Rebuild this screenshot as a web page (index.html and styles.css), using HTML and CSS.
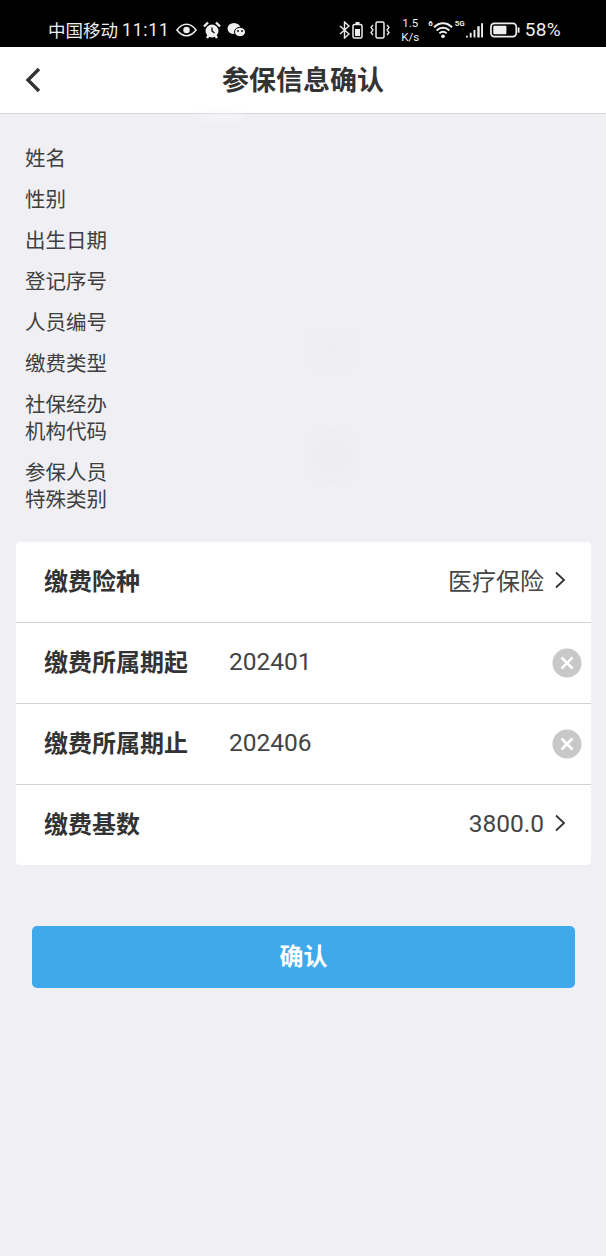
FILE: index.html
```html
<!DOCTYPE html>
<html lang="zh-CN">
<head>
    <meta charset="UTF-8">
    <meta name="viewport" content="width=device-width, initial-scale=1.0">
    <title>参保信息确认</title>
    <link rel="stylesheet" href="styles.css">
</head>
<body>
    <!-- Status bar -->
    <div class="status-bar">
        <div class="status-left">
            <span class="carrier">中国移动</span>
            <span class="clock">11:11</span>
            <svg class="ico" width="21" height="14" viewBox="0 0 22 14"><path d="M1 7c3-4 6-6 10-6s7 2 10 6c-3 4-6 6-10 6S4 11 1 7z" fill="none" stroke="#eee" stroke-width="1.6"/><circle cx="11" cy="7" r="3.4" fill="#eee"/></svg>
            <svg class="ico" width="18" height="18" viewBox="0 0 18 18"><circle cx="9" cy="10" r="6.500" fill="#eee"/><path d="M1 5.500 5 1.500M17 5.500 13 1.500M4 17l2-3M14 17l-2-3" stroke="#eee" stroke-width="2.400"/><path d="M9 6.500V10l2.500 2" fill="none" stroke="#000" stroke-width="1.300"/></svg>
            <svg class="ico" width="19" height="16" viewBox="0 0 19 16"><ellipse cx="7" cy="6.500" rx="6.500" ry="5.500" fill="#eee"/><ellipse cx="13" cy="10" rx="5.500" ry="4.700" fill="#eee" stroke="#000" stroke-width="1"/><circle cx="11" cy="9" r=".9" fill="#000"/><circle cx="15" cy="9" r=".9" fill="#000"/></svg>
        </div>
        <div class="status-right">
            <svg class="ico" width="11" height="18" viewBox="0 0 11 18"><path d="M1 5l9 8-4.500 4V1L10 5l-9 8" fill="none" stroke="#eee" stroke-width="1.400"/></svg>
            <svg class="ico" width="11" height="18" viewBox="0 0 11 18"><rect x="1" y="3.500" width="9" height="13.500" rx="1.500" fill="none" stroke="#eee" stroke-width="1.500"/><rect x="3.500" y="1" width="4" height="2" fill="#eee"/><rect x="3" y="8" width="5" height="7" fill="#eee"/></svg>
            <svg class="ico vibrate" width="20" height="18" viewBox="0 0 20 18"><rect x="6" y="1" width="8" height="16" rx="1.500" fill="none" stroke="#eee" stroke-width="1.500"/><path d="M3 4 1 6.500l2 2.500-2 2.500L3 14M17 4l2 2.500L17 9l2 2.500L17 14" fill="none" stroke="#eee" stroke-width="1.300"/></svg>
            <span class="speed">1.5<br>K/s</span>
            <span class="tiny">6</span>
            <svg class="ico" width="20" height="18" viewBox="0 0 22 18"><path d="M1 6c6-6 14-6 20 0M4 9.500c4-4 10-4 14 0M7 12.500c2.500-2 5.500-2 8 0" fill="none" stroke="#eee" stroke-width="2.200"/><circle cx="11" cy="16" r="2" fill="#eee"/></svg>
            <span class="tiny">5G</span>
            <svg class="ico" width="18" height="18" viewBox="0 0 19 18"><path d="M1 15h2v2H1zM5 12h2v5H5zM9 9h2v8H9zM13 5h2.500v12H13zM17 2h2v15h-2z" fill="#eee"/></svg>
            <svg class="ico battery" width="30" height="16" viewBox="0 0 32 16"><rect x="1" y="1" width="27" height="14" rx="3.500" fill="none" stroke="#eee" stroke-width="1.800"/><rect x="3.500" y="3.500" width="14" height="9" rx="1" fill="#eee"/><rect x="29.500" y="5" width="2" height="6" rx="1" fill="#eee"/></svg>
            <span class="percent">58%</span>
        </div>
    </div>

    <!-- Nav bar -->
    <header class="nav">
        <svg class="back" width="18" height="26" viewBox="0 0 18 26"><path d="M15 2 4 13l11 11" fill="none" stroke="#333" stroke-width="3.400"/></svg>
        <h1>参保信息确认</h1>
    </header>

    <!-- Read-only info -->
    <div class="info">
        <div class="smudge smudge-top"></div>
        <div class="smudge smudge-mid"></div>
        <div class="smudge smudge-low"></div>
        <div class="info-row">姓名</div>
        <div class="info-row">性别</div>
        <div class="info-row">出生日期</div>
        <div class="info-row">登记序号</div>
        <div class="info-row">人员编号</div>
        <div class="info-row">缴费类型</div>
        <div class="info-row">社保经办<br>机构代码</div>
        <div class="info-row">参保人员<br>特殊类别</div>
    </div>

    <!-- Form card -->
    <div class="card">
        <div class="row">
            <span class="row-label">缴费险种</span>
            <span class="row-value row-value-cn">医疗保险</span>
            <svg class="arrow" width="12" height="18" viewBox="0 0 12 18"><path d="M2 1.500 10 9l-8 7.500" fill="none" stroke="#333" stroke-width="1.800"/></svg>
        </div>
        <div class="row">
            <span class="row-label">缴费所属期起</span>
            <span class="row-input">202401</span>
            <svg class="clear" width="30" height="30" viewBox="0 0 30 30"><circle cx="15" cy="15" r="14.500" fill="#c8c8c8"/><path d="M9.500 9.500l11 11M20.500 9.500l-11 11" stroke="#fff" stroke-width="2.600"/></svg>
        </div>
        <div class="row">
            <span class="row-label">缴费所属期止</span>
            <span class="row-input">202406</span>
            <svg class="clear" width="30" height="30" viewBox="0 0 30 30"><circle cx="15" cy="15" r="14.500" fill="#c8c8c8"/><path d="M9.500 9.500l11 11M20.500 9.500l-11 11" stroke="#fff" stroke-width="2.600"/></svg>
        </div>
        <div class="row">
            <span class="row-label">缴费基数</span>
            <span class="row-value">3800.0</span>
            <svg class="arrow" width="12" height="18" viewBox="0 0 12 18"><path d="M2 1.500 10 9l-8 7.500" fill="none" stroke="#333" stroke-width="1.800"/></svg>
        </div>
    </div>

    <button class="confirm" type="button">确认</button>
</body>
</html>
```

FILE: styles.css
```css
/* Base styles */
body {
    margin: 0;
    height: 1256px;
    overflow: hidden;
    background: #efeff4;
    color: #333;
    font-family: Roboto, "Noto Sans CJK SC", sans-serif;
}

/* Status bar */
.status-bar {
    height: 47px;
    box-sizing: border-box;
    padding: 12px 45px 0 48px;
    display: flex;
    justify-content: space-between;
    align-items: center;
    background: #000;
    color: #eee;
}

.status-left, .status-right {
    display: flex;
    align-items: center;
}

.carrier {
    font-family: "Noto Sans CJK SC", sans-serif;
    font-size: 17.5px;
}

.clock {
    margin-left: 4px;
    font-size: 17.5px;
    letter-spacing: 0.8px;
}

.status-left .ico {
    margin-left: 6px;
}

.status-right .ico {
    margin-right: 2px;
}

.vibrate {
    margin-left: 5px;
}

.speed {
    width: 30px;
    margin: 0 3px 0 3px;
    font-size: 11.5px;
    line-height: 14px;
    text-align: center;
}

.tiny {
    align-self: flex-start;
    margin-top: 3px;
    font-size: 8px;
    font-weight: bold;
    line-height: 10px;
}

.battery {
    margin-left: 5px;
}

.percent {
    margin-left: 3px;
    font-size: 19px;
    letter-spacing: 0.3px;
}

/* Nav bar */
.nav {
    position: relative;
    height: 67px;
    display: flex;
    align-items: center;
    justify-content: center;
    box-sizing: border-box;
    background: #fff;
    border-bottom: 1px solid #d5d5da;
}

.nav h1 {
    margin: 0 0 4px;
    font-family: "Noto Sans CJK SC", sans-serif;
    font-size: 27px;
    font-weight: 700;
    color: #333;
}

.back {
    position: absolute;
    left: 24px;
    top: 20px;
}

/* Info list */
.info {
    position: relative;
    padding: 32px 25px 0;
    height: 403px;
    box-sizing: border-box;
}

.info-row {
    position: relative;
    margin-bottom: 14px;
    font-size: 20.500px;
    line-height: 27px;
    color: #3f3f3f;
}

/* Faint blurred patches left on the photo */
.smudge {
    position: absolute;
    filter: blur(5px);
}

.smudge-top {
    left: 200px;
    top: 0;
    width: 42px;
    height: 6px;
    background: #f8f8fa;
}

.smudge-mid {
    left: 316px;
    top: 224px;
    width: 32px;
    height: 26px;
    background: #eeeef2;
}

.smudge-low {
    left: 316px;
    top: 324px;
    width: 32px;
    height: 36px;
    background: #edecf0;
}

/* Form card */
.card {
    margin: 25px 15px 0 16px;
    background: #fff;
    border-radius: 4px;
}

.row {
    height: 81px;
    display: flex;
    align-items: center;
    box-sizing: border-box;
    padding: 0 25px 0 28px;
    border-bottom: 1px solid #d2d2d4;
}

.row:last-child {
    height: 80px;
    border-bottom: none;
}

.row-label {
    width: 185px;
    flex-shrink: 0;
    margin-bottom: 6px;
    font-family: "Noto Sans CJK SC", sans-serif;
    font-size: 24px;
    font-weight: 700;
    color: #333;
}

.row-value {
    margin-left: auto;
    margin-bottom: 3px;
    font-size: 24.500px;
    color: #444;
}

.row-value-cn {
    margin-bottom: 5px;
    font-size: 24px;
}

.row-input {
    flex: 1;
    margin-bottom: 3px;
    font-size: 24.500px;
    color: #444;
}

.arrow {
    margin-left: 10px;
    margin-bottom: 4px;
}

.clear {
    margin-right: -16px;
}

/* Confirm button */
.confirm {
    display: block;
    width: 543px;
    height: 62px;
    margin: 61px 0 0 32px;
    padding: 0 0 6px;
    border: none;
    border-radius: 5px;
    background: #40a9ec;
    color: #fff;
    font-family: "Noto Sans CJK SC", sans-serif;
    font-size: 24px;
    font-weight: 700;
}
```
